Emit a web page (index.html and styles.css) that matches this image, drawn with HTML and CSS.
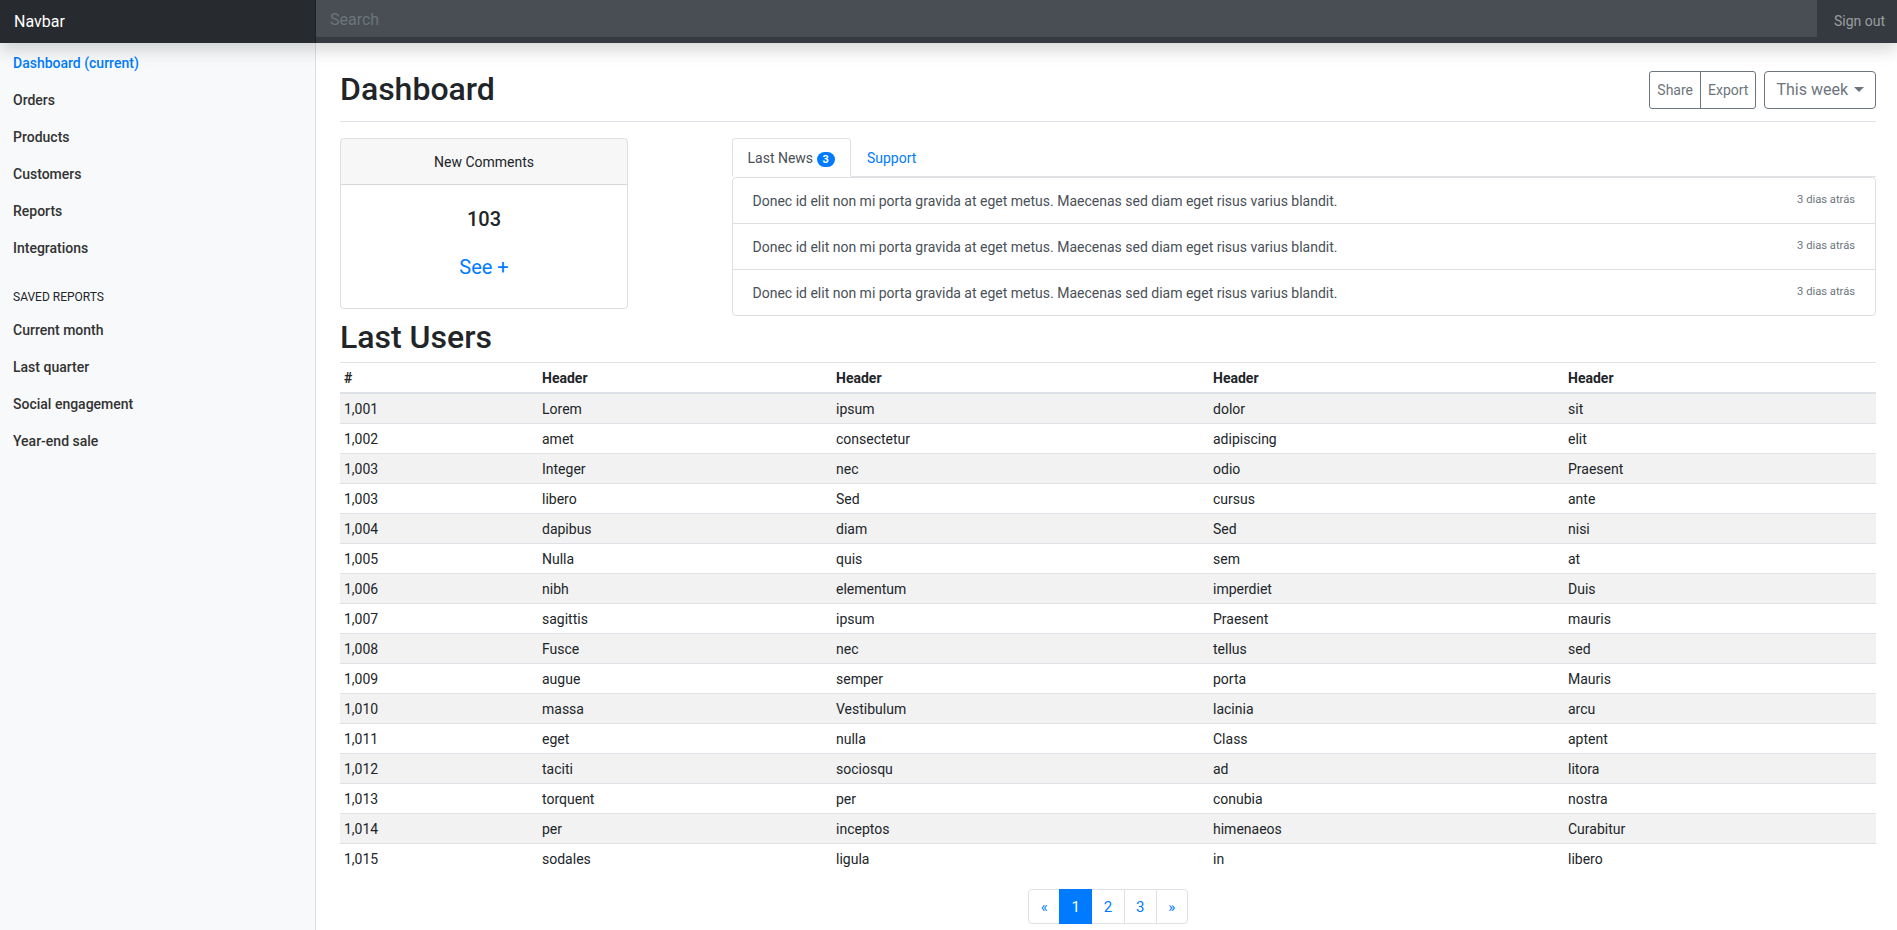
FILE: index.html
```html
<!DOCTYPE html>
<html lang="en">
<head>
<meta charset="utf-8">
<title>Dashboard</title>
<link rel="stylesheet" href="styles.css">
</head>
<body>
<header class="navbar">
  <a class="brand" href="#">Navbar</a>
  <div class="search-wrap"><input class="search" type="text" placeholder="Search" aria-label="Search"></div>
  <a class="signout" href="#">Sign out</a>
</header>
<div class="layout">
  <nav class="sidebar">
    <ul class="side-nav">
      <li><a class="side-link active" href="#">Dashboard (current)</a></li>
      <li><a class="side-link" href="#">Orders</a></li>
      <li><a class="side-link" href="#">Products</a></li>
      <li><a class="side-link" href="#">Customers</a></li>
      <li><a class="side-link" href="#">Reports</a></li>
      <li><a class="side-link" href="#">Integrations</a></li>
    </ul>
    <h6 class="side-heading">Saved reports</h6>
    <ul class="side-nav">
      <li><a class="side-link" href="#">Current month</a></li>
      <li><a class="side-link" href="#">Last quarter</a></li>
      <li><a class="side-link" href="#">Social engagement</a></li>
      <li><a class="side-link" href="#">Year-end sale</a></li>
    </ul>
  </nav>
  <main class="main">
    <div class="page-header">
      <h1 class="page-title">Dashboard</h1>
      <div class="toolbar">
        <div class="btn-group">
          <button class="btn btn-sm">Share</button>
          <button class="btn btn-sm">Export</button>
        </div>
        <button class="btn btn-dd">This week<span class="caret"></span></button>
      </div>
    </div>

    <div class="row">
      <div class="col-3">
        <div class="card">
          <div class="card-header">New Comments</div>
          <div class="card-body">
            <h5 class="card-count">103</h5>
            <a class="see-more" href="#">See +</a>
          </div>
        </div>
      </div>
      <div class="col-9">
        <ul class="tabs">
          <li><a class="tab active" href="#">Last News <span class="badge">3</span></a></li>
          <li><a class="tab" href="#">Support</a></li>
        </ul>
        <div class="list-group">
          <div class="list-item"><span>Donec id elit non mi porta gravida at eget metus. Maecenas sed diam eget risus varius blandit.</span><small>3 dias atrás</small></div>
          <div class="list-item"><span>Donec id elit non mi porta gravida at eget metus. Maecenas sed diam eget risus varius blandit.</span><small>3 dias atrás</small></div>
          <div class="list-item"><span>Donec id elit non mi porta gravida at eget metus. Maecenas sed diam eget risus varius blandit.</span><small>3 dias atrás</small></div>
        </div>
      </div>
    </div>

    <h2 class="section-title">Last Users</h2>
    <table class="table">
      <colgroup>
        <col class="c1"><col class="c2"><col class="c3"><col class="c4"><col class="c5">
      </colgroup>
      <thead>
        <tr><th>#</th><th>Header</th><th>Header</th><th>Header</th><th>Header</th></tr>
      </thead>
      <tbody>
        <tr><td>1,001</td><td>Lorem</td><td>ipsum</td><td>dolor</td><td>sit</td></tr>
        <tr><td>1,002</td><td>amet</td><td>consectetur</td><td>adipiscing</td><td>elit</td></tr>
        <tr><td>1,003</td><td>Integer</td><td>nec</td><td>odio</td><td>Praesent</td></tr>
        <tr><td>1,003</td><td>libero</td><td>Sed</td><td>cursus</td><td>ante</td></tr>
        <tr><td>1,004</td><td>dapibus</td><td>diam</td><td>Sed</td><td>nisi</td></tr>
        <tr><td>1,005</td><td>Nulla</td><td>quis</td><td>sem</td><td>at</td></tr>
        <tr><td>1,006</td><td>nibh</td><td>elementum</td><td>imperdiet</td><td>Duis</td></tr>
        <tr><td>1,007</td><td>sagittis</td><td>ipsum</td><td>Praesent</td><td>mauris</td></tr>
        <tr><td>1,008</td><td>Fusce</td><td>nec</td><td>tellus</td><td>sed</td></tr>
        <tr><td>1,009</td><td>augue</td><td>semper</td><td>porta</td><td>Mauris</td></tr>
        <tr><td>1,010</td><td>massa</td><td>Vestibulum</td><td>lacinia</td><td>arcu</td></tr>
        <tr><td>1,011</td><td>eget</td><td>nulla</td><td>Class</td><td>aptent</td></tr>
        <tr><td>1,012</td><td>taciti</td><td>sociosqu</td><td>ad</td><td>litora</td></tr>
        <tr><td>1,013</td><td>torquent</td><td>per</td><td>conubia</td><td>nostra</td></tr>
        <tr><td>1,014</td><td>per</td><td>inceptos</td><td>himenaeos</td><td>Curabitur</td></tr>
        <tr><td>1,015</td><td>sodales</td><td>ligula</td><td>in</td><td>libero</td></tr>
      </tbody>
    </table>

    <nav class="pager">
      <ul class="pagination">
        <li><a class="page-link" href="#">&laquo;</a></li>
        <li><a class="page-link active" href="#">1</a></li>
        <li><a class="page-link" href="#">2</a></li>
        <li><a class="page-link" href="#">3</a></li>
        <li><a class="page-link" href="#">&raquo;</a></li>
      </ul>
    </nav>
  </main>
</div>
</body>
</html>
```
FILE: styles.css
```css
* { box-sizing: border-box; }
html, body { margin: 0; padding: 0; }
body {
  font-family: Roboto, "Liberation Sans", Arial, sans-serif;
  font-size: 16px;
  line-height: 1.5;
  color: #212529;
  background: #fff;
}
a { text-decoration: none; }
ul { list-style: none; margin: 0; padding: 0; }

/* Navbar */
.navbar {
  position: relative;
  z-index: 10;
  display: flex;
  height: 43px;
  background: #343a40;
  box-shadow: 0 8px 16px rgba(0,0,0,.15);
}
.brand {
  flex: 0 0 316px;
  padding-left: 14px;
  line-height: 43px;
  font-size: 16px;
  color: #fff;
  background: rgba(0,0,0,.25);
  box-shadow: inset -1px 0 0 rgba(0,0,0,.25);
}
.search-wrap { flex: 1; }
.search {
  display: block;
  width: 100%;
  height: 37px;
  padding: 2px 14px 0;
  border: 0;
  border-radius: 0;
  outline: none;
  font-family: inherit;
  font-size: 16px;
  color: #fff;
  background: rgba(255,255,255,.1);
}
.search::placeholder { color: #6c757d; }
.signout {
  flex: 0 0 80px;
  padding-left: 17px;
  font-size: 14px;
  line-height: 42px;
  color: rgba(255,255,255,.5);
}

/* Layout */
.layout { display: flex; align-items: stretch; }
.sidebar {
  flex: 0 0 316px;
  min-height: calc(100vh - 43px);
  padding-top: 2px;
  background: #f8f9fa;
  box-shadow: inset -1px 0 0 rgba(0,0,0,.1);
}
.side-link {
  display: block;
  padding: 8px 16px 8px 13px;
  font-size: 14px;
  line-height: 21px;
  font-weight: 500;
  color: #333;
}
.side-link.active { color: #007bff; }
.side-heading {
  margin: 21px 0 6px;
  padding-left: 13px;
  font-size: 12px;
  line-height: 18px;
  font-weight: 400;
  text-transform: uppercase;
  color: #212529;
}

.main {
  flex: 1;
  min-width: 0;
  padding: 0 21px 0 24px;
}

/* Page header */
.page-header {
  display: flex;
  justify-content: space-between;
  align-items: center;
  padding: 28px 0 12px;
  border-bottom: 1px solid #dee2e6;
  margin-bottom: 16px;
}
.page-title {
  margin: -2px 0 0;
  font-size: 32px;
  line-height: 38px;
  font-weight: 500;
}
.toolbar { display: flex; align-items: stretch; height: 38px; }
.btn-group { display: flex; margin-right: 8px; }
.btn {
  font-family: inherit;
  color: #6c757d;
  background: transparent;
  border: 1px solid #6c757d;
  border-radius: 4px;
  cursor: pointer;
}
.btn-sm {
  padding: 1px 7px 0;
  font-size: 14px;
  line-height: 21px;
  border-radius: 0;
}
.btn-group .btn-sm:first-child { border-radius: 3px 0 0 3px; }
.btn-group .btn-sm:last-child { border-radius: 0 3px 3px 0; margin-left: -1px; }
.btn-dd {
  padding: 6px 11px;
  font-size: 16px;
  line-height: 24px;
}
.caret {
  display: inline-block;
  margin-left: 6px;
  vertical-align: 3px;
  border-top: 5px solid #6c757d;
  border-left: 5px solid transparent;
  border-right: 5px solid transparent;
}

/* Row */
.row { display: flex; margin: 0 -15px; }
.col-3 { flex: 0 0 25%; padding: 0 15px; }
.col-9 { flex: 0 0 75%; padding: 0 15px; }

.card {
  width: 288px;
  border: 1px solid rgba(0,0,0,.125);
  border-radius: 4px;
  overflow: hidden;
}
.card-header {
  padding: 13px 20px 11px;
  font-size: 14px;
  line-height: 21px;
  text-align: center;
  background: rgba(0,0,0,.03);
  border-bottom: 1px solid rgba(0,0,0,.125);
}
.card-body {
  padding: 22px 20px 17px;
  text-align: center;
}
.card-count {
  margin: 0 0 12px;
  font-size: 20px;
  line-height: 24px;
  font-weight: 500;
}
.see-more {
  display: inline-block;
  padding: 9px 16px;
  font-size: 20px;
  line-height: 30px;
  color: #007bff;
}

/* Tabs */
.tabs {
  display: flex;
  border-bottom: 1px solid #dee2e6;
}
.tab {
  display: block;
  margin-bottom: -1px;
  padding: 9px 15px 7px;
  font-size: 14px;
  line-height: 21px;
  color: #007bff;
  border: 1px solid transparent;
  border-radius: 4px 4px 0 0;
}
.tab.active {
  color: #495057;
  background: #fff;
  border-color: #dee2e6 #dee2e6 #fff;
}
.badge {
  display: inline-block;
  min-width: 18px;
  padding: 2px 6px 1px;
  font-size: 11px;
  line-height: 12px;
  font-weight: 700;
  text-align: center;
  color: #fff;
  background: #007bff;
  border-radius: 10px;
  vertical-align: 0;
}
.list-group {
  border: 1px solid rgba(0,0,0,.125);
  border-radius: 4px;
}
.list-item {
  display: flex;
  justify-content: space-between;
  align-items: flex-start;
  padding: 13px 20px 11px;
  font-size: 14px;
  line-height: 21px;
  color: #495057;
  border-top: 1px solid rgba(0,0,0,.125);
}
.list-item:first-child { border-top: 0; }
.list-item small {
  font-size: 11.2px;
  line-height: 18px;
  color: #6c757d;
}

/* Table */
.section-title {
  margin: 0 0 6px;
  padding-top: 2px;
  font-size: 32px;
  line-height: 38px;
  font-weight: 500;
}
.table {
  width: 100%;
  table-layout: fixed;
  border-collapse: collapse;
  margin-bottom: 16px;
  font-size: 14px;
  line-height: 21px;
}
.c1 { width: 198px; }
.c2 { width: 294px; }
.c3 { width: 377px; }
.c4 { width: 355px; }
.table th, .table td {
  padding: 5px 4px 3px;
  text-align: left;
  border-top: 1px solid #dee2e6;
}
.table th { font-weight: 700; border-bottom: 2px solid #dee2e6; }
.table tbody tr:nth-child(odd) { background: rgba(0,0,0,.05); }

/* Pagination */
.pager { display: flex; justify-content: center; padding-bottom: 16px; }
.pagination { display: flex; }
.page-link {
  display: block;
  margin-left: -1px;
  padding: 9px 11.4px 8px;
  font-size: 15px;
  line-height: 16px;
  color: #007bff;
  background: #fff;
  border: 1px solid #dee2e6;
}
.pagination li:first-child .page-link { margin-left: 0; border-radius: 4px 0 0 4px; }
.pagination li:last-child .page-link { border-radius: 0 4px 4px 0; }
.page-link.active { color: #fff; background: #007bff; border-color: #007bff; position: relative; z-index: 1; }
```
